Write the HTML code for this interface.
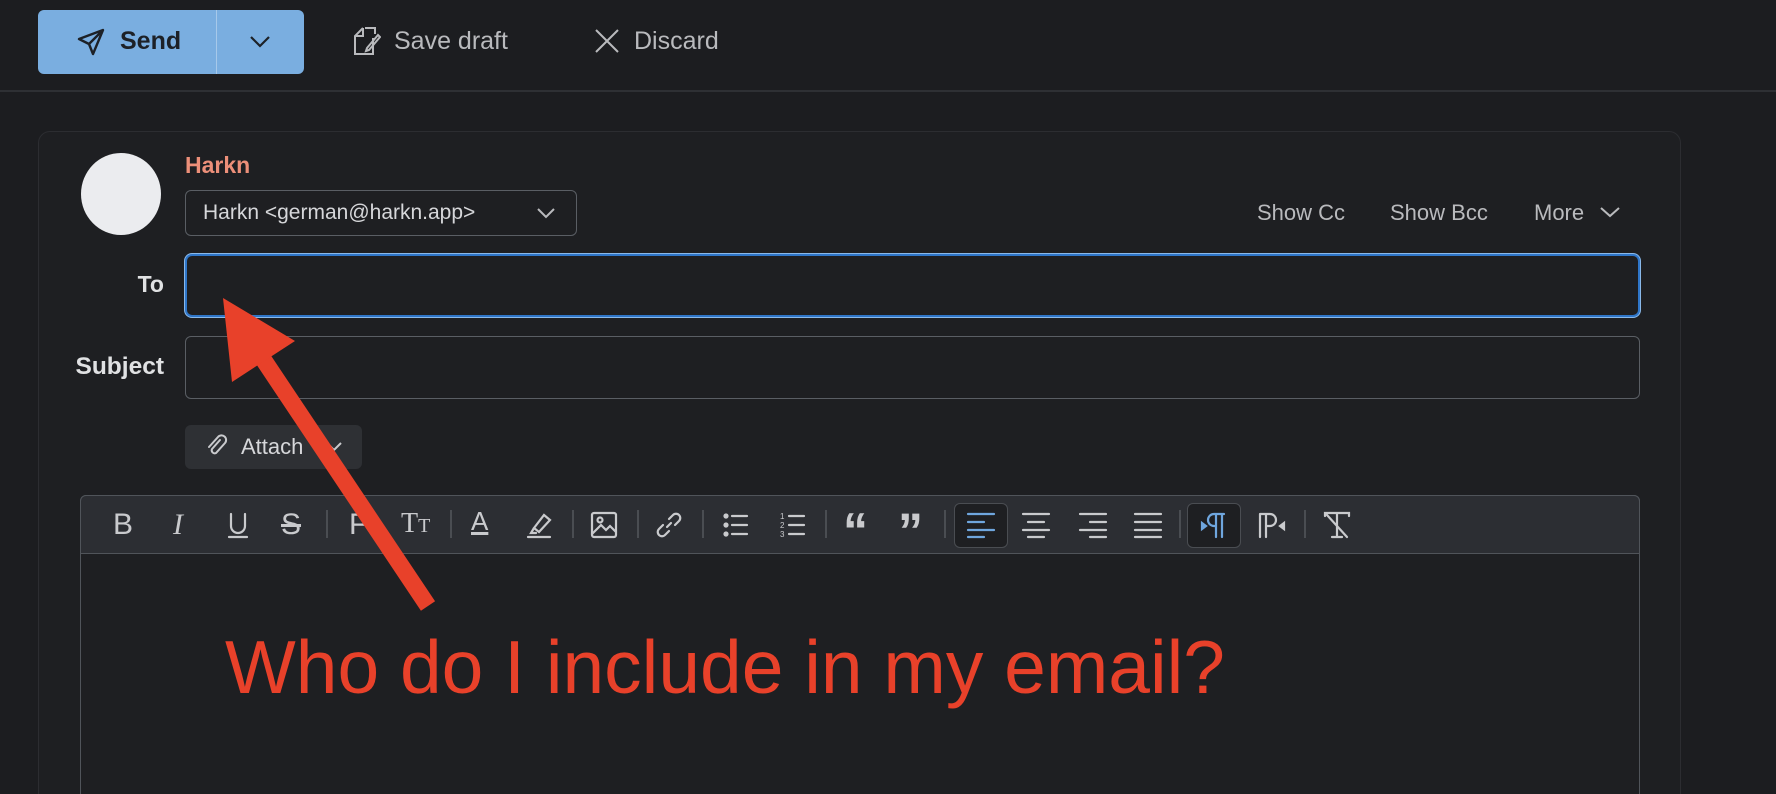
<!DOCTYPE html>
<html><head><meta charset="utf-8"><style>
*{box-sizing:border-box;margin:0;padding:0}
html,body{width:1776px;height:794px;overflow:hidden}
body{background:#1c1d20;position:relative;font-family:"Liberation Sans",sans-serif;color:#c9cacd}
.a{position:absolute}
.topline{left:0;top:90px;width:1776px;height:2px;background:#2e3034}
.send{left:38px;top:10px;width:266px;height:64px;background:#7aaee0;border-radius:6px}
.card{left:38px;top:131px;width:1643px;height:680px;background:#1e1f22;border:1px solid #2c2d31;border-radius:12px}
.t{font-size:24px;white-space:nowrap}
.inp{border:1.5px solid #5a5e64;border-radius:6px;background:#1e1f22}
.tb{left:80px;top:495px;width:1560px;height:320px;border:1.5px solid #50545a;border-radius:6px 6px 0 0;background:#1e1f22}
.tbar{left:80px;top:495px;width:1560px;height:59px;background:#2c2e33;border:1.5px solid #50545a;border-radius:6px 6px 0 0}
.ic{top:510px;width:30px;height:30px}
.sep{top:510px;width:2px;height:28px;background:#4a4d52}
svg.ic{stroke:#c9cacd;fill:none;stroke-width:2.2;stroke-linecap:round}
</style></head><body>
<div class="a topline"></div>
<div class="a send"></div>
<div class="a" style="left:216px;top:10px;width:1px;height:64px;background:#a7c9ea"></div>
<svg class="a" style="left:76px;top:27px" width="30" height="30" viewBox="0 0 30 30" fill="none" stroke="#1d2127" stroke-width="2.4" stroke-linejoin="round"><path d="M3 12 L27 3 L17 27 L13 17 Z M13 17 L27 3"/></svg>
<div class="a t" style="left:120px;top:27px;color:#1d2127;font-weight:bold;font-size:25px">Send</div>
<svg class="a" style="left:248px;top:32px" width="24" height="18" viewBox="0 0 24 18" fill="none" stroke="#1d2127" stroke-width="2.2"><path d="M3 5 L12 14 L21 5"/></svg>
<svg class="a" style="left:353px;top:26px" width="28" height="32" viewBox="0 0 28 32" fill="none" stroke="#b9babd" stroke-width="2"><path d="M12 2 H22 V8 M20 12 V28 H2 V10 L10 2 M2 10 H10 V2"/><path d="M14 22 L25 9 L27 11 L16 24 L13 25 Z"/></svg>
<div class="a t" style="left:394px;top:27px;font-size:25px;color:#b9babd">Save draft</div>
<svg class="a" style="left:594px;top:28px" width="26" height="26" viewBox="0 0 26 26" stroke="#b9babd" stroke-width="2"><path d="M2 2 L24 24 M24 2 L2 24"/></svg>
<div class="a t" style="left:634px;top:27px;font-size:25px;color:#b9babd">Discard</div>

<div class="a card"></div>
<div class="a" style="left:81px;top:153px;width:80px;height:82px;border-radius:50%;background:#ebecef"></div>
<div class="a t" style="left:185px;top:152px;color:#ec8f79;font-weight:bold;font-size:23px">Harkn</div>
<div class="a inp" style="left:185px;top:190px;width:392px;height:46px"></div>
<div class="a t" style="left:203px;top:201px;font-size:21px;color:#d6d7da">Harkn &lt;german@harkn.app&gt;</div>
<svg class="a" style="left:535px;top:205px" width="22" height="16" viewBox="0 0 22 16" fill="none" stroke="#b9babd" stroke-width="2"><path d="M3 4 L11 12 L19 4"/></svg>
<div class="a t" style="left:1257px;top:200px;font-size:22px;color:#b9babd">Show Cc</div>
<div class="a t" style="left:1390px;top:200px;font-size:22px;color:#b9babd">Show Bcc</div>
<div class="a t" style="left:1534px;top:200px;font-size:22px;color:#b9babd">More</div>
<svg class="a" style="left:1598px;top:204px" width="24" height="16" viewBox="0 0 24 16" fill="none" stroke="#b9babd" stroke-width="2"><path d="M3 4 L12 12 L21 4"/></svg>

<div class="a t" style="left:100px;top:271px;width:64px;text-align:right;font-weight:bold;font-size:23px;color:#e0e1e3">To</div>
<div class="a" style="left:185px;top:254px;width:1455px;height:63px;border:2px solid #2f76c9;box-shadow:0 0 0 1px #8ab9ea;border-radius:7px;background:#1e1f22"></div>
<div class="a t" style="left:30px;top:353px;width:134px;text-align:right;font-weight:bold;font-size:24.5px;color:#e0e1e3">Subject</div>
<div class="a inp" style="left:185px;top:336px;width:1455px;height:63px"></div>
<div class="a" style="left:185px;top:425px;width:177px;height:44px;background:#2e3034;border-radius:6px"></div>
<svg class="a" style="left:205px;top:434px" width="24" height="24" viewBox="0 0 24 24" fill="none" stroke="#c9cacd" stroke-width="2" stroke-linecap="round"><path d="M15 6 L7 15 A3 3 0 0 0 11 19 L20 9 A4.5 4.5 0 0 0 13 3 L4 13"/></svg>
<div class="a t" style="left:241px;top:434px;font-size:22px;color:#d6d7da">Attach</div>
<svg class="a" style="left:324px;top:438px" width="20" height="16" viewBox="0 0 20 16" fill="none" stroke="#c9cacd" stroke-width="2"><path d="M3 5 L10 12 L17 5"/></svg>

<div class="a tb"></div>
<div class="a tbar"></div>
<div class="a" style="left:954px;top:503px;width:54px;height:45px;background:#1e1f22;border:1.5px solid #4a4d52;border-radius:6px"></div>
<div class="a" style="left:1187px;top:503px;width:54px;height:45px;background:#1e1f22;border:1.5px solid #4a4d52;border-radius:6px"></div>
<div class="a t" style="left:113px;top:508px;font-size:30px;color:#c9cacd">B</div>
<div class="a t" style="left:173px;top:508px;font-size:30px;font-style:italic;color:#c9cacd;font-family:'Liberation Serif',serif">I</div>
<svg class="a ic" style="left:223px" viewBox="0 0 30 30"><path d="M8 4 V16 A7 7 0 0 0 22 16 V4 M6 27 H24"/></svg>
<div class="a t" style="left:281px;top:508px;font-size:30px;color:#c9cacd;text-decoration:line-through">S</div>
<div class="a sep" style="left:326px"></div>
<div class="a t" style="left:349px;top:508px;font-size:30px;color:#c9cacd">F</div>
<div class="a t" style="left:401px;top:508px;font-size:28px;color:#c9cacd;font-family:'Liberation Serif',serif">T<span style="font-size:20px">T</span></div>
<div class="a sep" style="left:450px"></div>
<div class="a t" style="left:471px;top:506px;font-size:26px;color:#c9cacd;text-decoration:underline;text-decoration-thickness:3px">A</div>
<svg class="a ic" style="left:524px" viewBox="0 0 30 30"><path d="M10 18 L20 5 L26 10 L15 22 Z M10 18 L7 23 L12 23 M4 27 H26"/></svg>
<div class="a sep" style="left:572px"></div>
<svg class="a ic" style="left:589px" viewBox="0 0 30 30"><rect x="3" y="3" width="24" height="24" rx="2"/><circle cx="11" cy="10" r="2.5"/><path d="M3 24 L12 15 L17 20 L21 16 L27 22"/></svg>
<div class="a sep" style="left:637px"></div>
<svg class="a ic" style="left:654px" viewBox="0 0 30 30"><path d="M13 17 L17 13 M15 9 L19 5 A4 4 0 0 1 25 11 L21 15 M15 21 L11 25 A4 4 0 0 1 5 19 L9 15"/></svg>
<div class="a sep" style="left:702px"></div>
<svg class="a ic" style="left:721px" viewBox="0 0 30 30"><circle cx="5" cy="6" r="1.5" fill="#c9cacd"/><circle cx="5" cy="15" r="1.5" fill="#c9cacd"/><circle cx="5" cy="24" r="1.5" fill="#c9cacd"/><path d="M11 6 H26 M11 15 H26 M11 24 H26"/></svg>
<svg class="a ic" style="left:778px" viewBox="0 0 30 30"><path d="M11 6 H26 M11 15 H26 M11 24 H26"/><text x="2" y="9" font-size="8" fill="#c9cacd" stroke="none">1</text><text x="2" y="18" font-size="8" fill="#c9cacd" stroke="none">2</text><text x="2" y="27" font-size="8" fill="#c9cacd" stroke="none">3</text></svg>
<div class="a sep" style="left:825px"></div>
<div class="a t" style="left:843px;top:506px;font-size:50px;font-weight:bold;color:#c9cacd;line-height:1">“</div>
<div class="a t" style="left:898px;top:506px;font-size:50px;font-weight:bold;color:#c9cacd;line-height:1">”</div>
<div class="a sep" style="left:944px"></div>
<svg class="a ic" style="left:966px;stroke:#6fa6de" viewBox="0 0 30 30"><path d="M2 4 H28 M2 12 H18 M2 20 H28 M2 27 H18"/></svg>
<svg class="a ic" style="left:1021px" viewBox="0 0 30 30"><path d="M2 4 H28 M7 12 H23 M2 20 H28 M7 27 H23"/></svg>
<svg class="a ic" style="left:1078px" viewBox="0 0 30 30"><path d="M2 4 H28 M12 12 H28 M2 20 H28 M12 27 H28"/></svg>
<svg class="a ic" style="left:1133px" viewBox="0 0 30 30"><path d="M2 4 H28 M2 12 H28 M2 20 H28 M2 27 H28"/></svg>
<div class="a sep" style="left:1179px"></div>
<svg class="a ic" style="left:1200px;stroke:#6fa6de" viewBox="0 0 30 30"><path d="M2 13 L6 16 L2 19 Z" fill="#6fa6de"/><path d="M16 4 V27 M22 4 V27 M24 4 H14 A6 6 0 0 0 14 16 H16"/></svg>
<svg class="a ic" style="left:1256px" viewBox="0 0 30 30"><path d="M4 4 V27 M10 4 V27 M4 4 H14 A6 6 0 0 1 14 16 H10"/><path d="M28 13 L24 16 L28 19 Z" fill="#c9cacd"/></svg>
<div class="a sep" style="left:1304px"></div>
<svg class="a ic" style="left:1322px" viewBox="0 0 30 30"><path d="M3 6 V3 H27 V6 M15 3 V27 M10 27 H20 M5 5 L25 27"/></svg>

<svg class="a" style="left:0;top:0" width="1776" height="794">
<path d="M428 606 L253 344" stroke="#e8412a" stroke-width="17"/>
<path d="M223 298 L295 341 L232 382 Z" fill="#e8412a"/>
<text x="225" y="693" font-family="Liberation Sans, sans-serif" font-size="75" fill="#e8412a" textLength="1000" lengthAdjust="spacingAndGlyphs">Who do I include in my email?</text>
</svg>
</body></html>
